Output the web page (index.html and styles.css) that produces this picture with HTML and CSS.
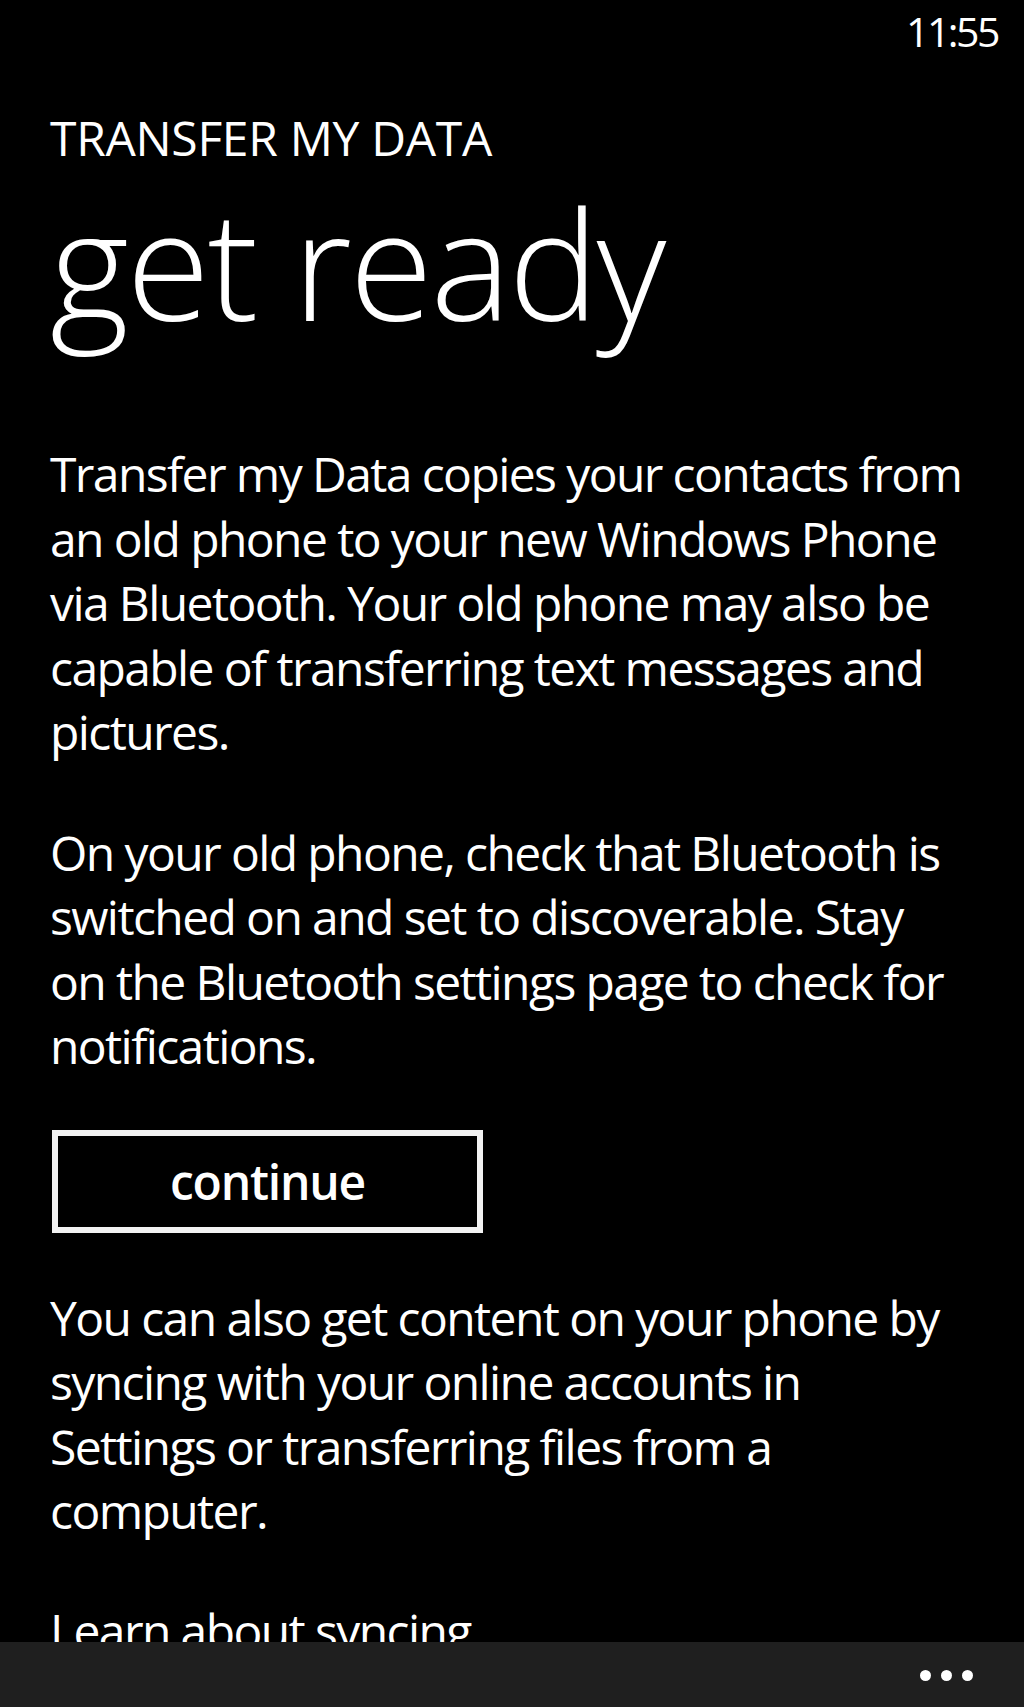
FILE: index.html
```html
<!DOCTYPE html>
<html lang="en">
<head>
    <meta charset="UTF-8">
    <meta name="viewport" content="width=device-width, initial-scale=1.0">
    <title>Transfer my Data</title>
    <link rel="stylesheet" href="styles.css">
</head>
<body>
    <div class="phone">
        <div class="status-bar">
            <span class="clock">11:55</span>
        </div>
        <div class="page">
            <div class="app-title">TRANSFER MY DATA</div>
            <h1 class="page-title">get ready</h1>

            <p class="body-text">Transfer my Data copies your contacts from<br>an old phone to your new Windows Phone<br>via Bluetooth. Your old phone may also be<br>capable of transferring text messages and<br>pictures.</p>

            <p class="body-text">On your old phone, check that Bluetooth is<br>switched on and set to discoverable. Stay<br>on the Bluetooth settings page to check for<br>notifications.</p>

            <button class="wp-button">continue</button>

            <p class="body-text">You can also get content on your phone by<br>syncing with your online accounts in<br>Settings or transferring files from a<br>computer.</p>

            <p class="body-text link">Learn about syncing</p>
        </div>
        <div class="app-bar">
            <div class="dots">
                <span class="dot"></span>
                <span class="dot"></span>
                <span class="dot"></span>
            </div>
        </div>
    </div>
</body>
</html>
```

FILE: styles.css
```css
* {
    box-sizing: border-box;
    margin: 0;
    padding: 0;
}

body {
    background: #000;
    color: #fff;
    font-family: 'Open Sans', 'Noto Sans', sans-serif;
}

.phone {
    display: flex;
    flex-direction: column;
    width: 1024px;
    height: 1707px;
    overflow: hidden;
}

.status-bar {
    display: flex;
    justify-content: flex-end;
    padding: 6px 26px 0 0;
    height: 56px;
}

.clock {
    font-size: 41px;
    line-height: 50px;
    letter-spacing: -2.5px;
}

.page {
    flex: 1;
    overflow: hidden;
    padding: 52px 0 0 50px;
}

.app-title {
    font-size: 48px;
    line-height: 60px;
    letter-spacing: -0.3px;
}

.page-title {
    font-size: 152px;
    font-weight: 300;
    line-height: 160px;
    margin-top: 15px;
    letter-spacing: -2.5px;
}

.body-text {
    font-size: 48px;
    line-height: 64.5px;
    white-space: nowrap;
    letter-spacing: -1.6px;
    margin-top: 56px;
}

.page-title + .body-text {
    margin-top: 99px;
}

.wp-button {
    display: flex;
    align-items: center;
    justify-content: center;
    width: 431px;
    height: 103px;
    margin-top: 51px;
    margin-left: 2px;
    background: #000;
    color: #fff;
    border: 6px solid #f2f2f2;
    font-family: inherit;
    font-size: 48px;
    font-weight: 600;
    letter-spacing: -1.2px;
    cursor: pointer;
}

.wp-button + .body-text {
    margin-top: 53px;
}

.link {
    margin-top: 55px;
}

.app-bar {
    display: flex;
    justify-content: flex-end;
    align-items: center;
    height: 65px;
    flex-shrink: 0;
    background: #1f1f1f;
    padding-right: 51px;
}

.dots {
    display: flex;
    gap: 10px;
    margin-top: 2px;
}

.dot {
    width: 11px;
    height: 11px;
    border-radius: 50%;
    background: #fff;
}
```
